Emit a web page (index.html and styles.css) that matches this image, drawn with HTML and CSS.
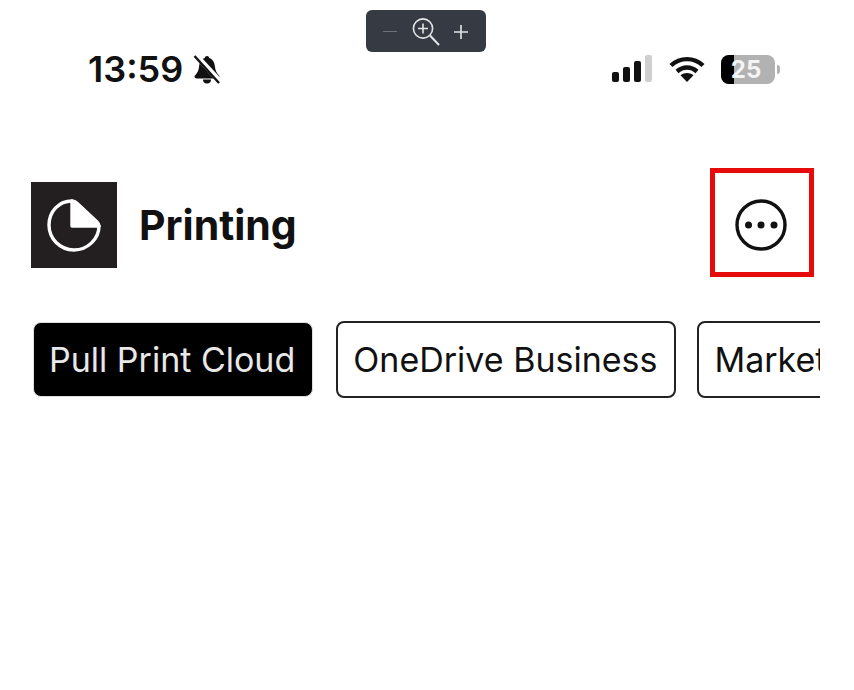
FILE: index.html
```html
<!DOCTYPE html>
<html lang="en">
<head>
<meta charset="utf-8">
<title>Printing</title>
<link rel="stylesheet" href="styles.css">
</head>
<body>
<div class="zoom-bar">
  <span class="zoom-minus"></span>
  <svg class="zoom-lens" width="30" height="30" viewBox="0 0 30 30" fill="none" stroke="#e4e5e6" stroke-width="1.6"><circle cx="12" cy="11.5" r="9.6"/><path d="M12 6.5v10M7 11.5h10"/><path d="M19 18.500l9 9.500" stroke-width="2"/></svg>
  <svg class="zoom-plus" width="14" height="14" viewBox="0 0 14 14" stroke="#e4e5e6" stroke-width="1.6"><path d="M7 0v14M0 7h14"/></svg>
</div>
<main class="page">
  <header class="status">
    <div class="status-left">
      <span class="time">13:59</span>
      <svg width="30" height="32" viewBox="0 0 30 32"><path d="M15 3c-1.300 0-2 .8-2.200 2C9 6.200 7.500 9.500 7 14c-.4 3.500-1.500 6-4.500 9 0 1.500.8 2.500 2 2.500h21c1.200 0 2-1 2-2.500-3-3-4.100-5.500-4.500-9-.5-4.500-2-7.800-5.800-9C17 3.800 16.300 3 15 3z" fill="#111"/><path d="M11 26.500a4 4 0 0 0 8 0z" fill="#111"/><path d="M4 2.500l24 26" stroke="#fff" stroke-width="5.500"/><path d="M2.500 3l24.500 27" stroke="#111" stroke-width="2.400"/></svg>
    </div>
    <div class="status-right">
      <svg width="42" height="30" viewBox="0 0 42 30"><rect x="1" y="18" width="7" height="10" rx="2" fill="#111"/><rect x="12" y="13" width="7" height="15" rx="2" fill="#111"/><rect x="23" y="7" width="7" height="21" rx="2" fill="#111"/><rect x="34" y="1" width="7" height="27" rx="2" fill="#cfcfcf"/></svg>
      <svg width="36" height="28" viewBox="0 0 36 28" fill="none" stroke="#111" stroke-width="4.400"><path d="M2 10.500C11 2 25 2 34 10.500"/><path d="M8 16.500c6-5.300 14-5.300 20 0"/><path d="M18 27l-6.500-6.800c3.800-3 9.200-3 13 0z" fill="#111" stroke="none"/></svg>
      <div class="battery">
        <div class="battery-body"><span class="battery-fill"></span><span class="battery-num">25</span></div>
        <span class="battery-cap"></span>
      </div>
    </div>
  </header>

  <section class="title-row">
    <div class="title-left">
      <div class="logo">
        <svg width="56" height="56" viewBox="0 0 56 56" fill="none" stroke="#fff" stroke-width="3.400" stroke-linejoin="round" stroke-linecap="round"><path d="M26 4C13 4 3 14.500 3 28s10.800 25 25 25c13.500 0 25-11 25-24"/><path d="M26 4c2 0 3.500 .7 5 2.200l19.500 18.300c1.500 1.500 2.500 3 2.500 4.500H26z" fill="#fff"/></svg>
      </div>
      <h1 class="title">Printing</h1>
    </div>
    <button class="more" type="button" aria-label="More">
      <svg width="52" height="52" viewBox="0 0 52 52"><circle cx="26" cy="26" r="24" fill="none" stroke="#111" stroke-width="3.400"/><circle cx="13.500" cy="26" r="3.500" fill="#111"/><circle cx="26" cy="26" r="3.500" fill="#111"/><circle cx="39" cy="26" r="3.500" fill="#111"/></svg>
    </button>
  </section>

  <nav class="tabs">
    <span class="tab active">Pull Print Cloud</span>
    <span class="tab">OneDrive Business</span>
    <span class="tab">Marketing</span>
  </nav>
</main>
</body>
</html>
```
FILE: styles.css
```css
* { box-sizing: border-box; }
html, body { margin: 0; padding: 0; background: #fff; }
body { width: 854px; height: 690px; overflow: hidden; font-family: Inter, "Liberation Sans", sans-serif; color: #111; position: relative; }

.zoom-bar {
  position: absolute; left: 366px; top: 10px; width: 120px; height: 42px;
  background: #363a42; border-radius: 6px;
  display: flex; align-items: center; padding-left: 17px;
}
.zoom-minus { width: 14px; height: 1px; background: #6d7077; margin-top: 1px; }
.zoom-lens { margin-left: 14px; margin-top: 1px; }
.zoom-plus { margin-left: 13px; margin-top: 1px; }

.page { padding: 0 33px 0 31px; }

.status { height: 138px; padding: 46px 0 0 57px; display: flex; justify-content: space-between; align-items: flex-start; }
.status-left { display: flex; align-items: center; gap: 9px; height: 46px; }
.time { font-size: 36px; font-weight: 600; line-height: 46px; }
.status-right { display: flex; align-items: center; height: 46px; gap: 16px; padding-right: 41px; }
.battery { display: flex; align-items: center; gap: 2px; }
.battery-body { position: relative; width: 54px; height: 29px; border-radius: 8px; background: #b2b2b2; overflow: hidden; }
.battery-fill { position: absolute; left: 0; top: 0; bottom: 0; width: 13px; background: #000; }
.battery-num { position: absolute; left: 0; right: 0; top: 0; text-align: center; color: #f4f4f4; font-size: 24px; font-weight: 700; line-height: 29px; padding-right: 4px; }
.battery-cap { width: 3px; height: 9px; background: #b2b2b2; border-radius: 0 3px 3px 0; }

.title-row { display: flex; justify-content: space-between; align-items: center; height: 109px; margin-top: 30px; margin-right: 7px; }
.title-left { display: flex; align-items: center; gap: 22px; padding-top: 5px; }
.logo { width: 86px; height: 86px; background: #231f20; display: flex; align-items: center; justify-content: center; }
.title { margin: 0; font-size: 41px; font-weight: 700; line-height: 46px; color: #111; }
.more { width: 104px; height: 109px; padding: 5px 2px 0 0; background: #fff; border: 5px solid #e60a0a; display: flex; align-items: center; justify-content: center; }

.tabs { display: flex; align-items: center; gap: 21px; margin-top: 44px; width: 789px; overflow: hidden; padding-left: 2px; }
.tab { flex: none; height: 77px; padding: 0 17px 0 15px; border: 2px solid #222; border-radius: 8px; font-size: 34px; line-height: 73px; color: #111; white-space: nowrap; background: #fff; }
.tab.active { height: 75px; margin-right: 2px; background: #000; color: #e8e8e8; border-color: #ddd; border-width: 1px; line-height: 73px; }
```
